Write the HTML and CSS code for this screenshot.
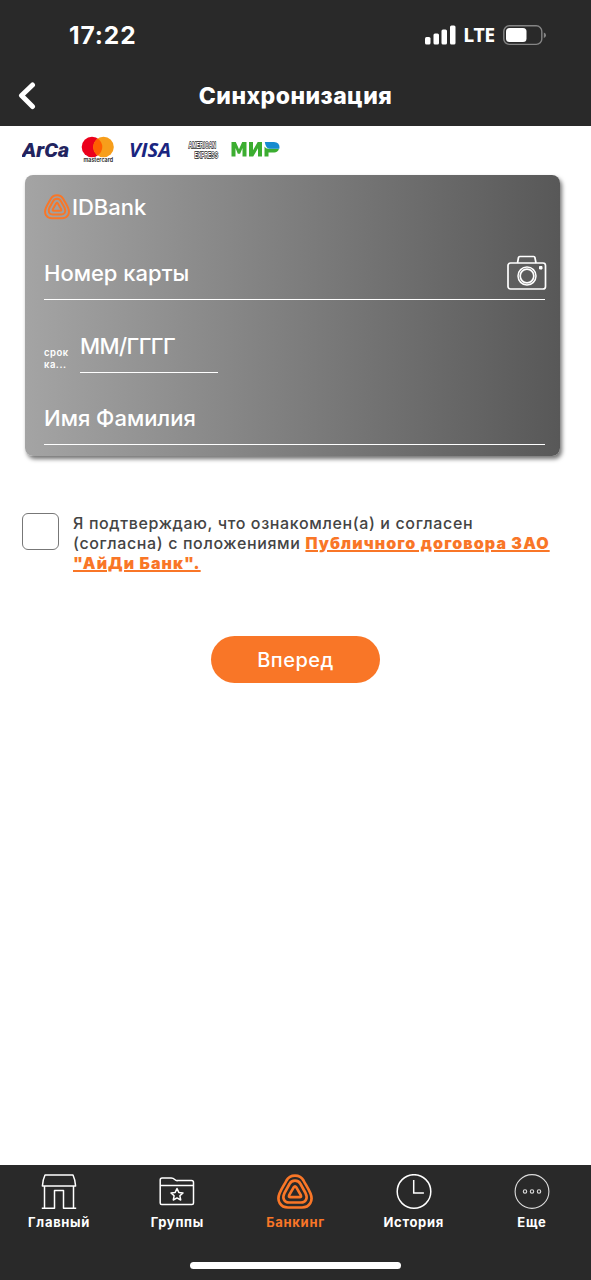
FILE: index.html
```html
<!DOCTYPE html>
<html lang="ru">
<head>
<meta charset="utf-8">
<title>Синхронизация</title>
<link rel="stylesheet" href="styles.css">
</head>
<body>
<svg width="0" height="0" class="defs">
  <symbol id="idbank" viewBox="0 0 36 36">
    <g fill="none" stroke="currentColor" stroke-linejoin="round">
      <path stroke-width="2.700" d="M9.500 6.500C13 0 23 0 26.500 6.500C28.500 10.500 31.500 14.500 33.500 19.500C36.500 27 32.500 33.500 25 33.500H11C3.500 33.500-.5 27 2.500 19.500C4.500 14.500 7.500 10.500 9.500 6.500Z"/>
      <path stroke-width="2.700" d="M12.500 10C14.700 5.500 21.300 5.500 23.500 10L28.500 19C31.200 24.500 28.500 28.500 24 28.500H12C7.500 28.500 4.800 24.500 7.500 19Z"/>
      <path stroke-width="2.700" d="M16.800 13.200Q18 11.300 19.200 13.200L23.800 21.200Q24.700 23.200 22.500 23.200H13.500Q11.300 23.200 12.200 21.200Z"/>
    </g>
  </symbol>
</svg>
<div class="app">
  <header class="top">
    <div class="status">
      <span class="time">17:22</span>
      <div class="signals">
        <svg width="31" height="20" viewBox="0 0 31 20" fill="#fff"><rect x="0" y="12" width="5.500" height="7.500" rx="1.500"/><rect x="8.500" y="8.500" width="5.500" height="11" rx="1.500"/><rect x="16.500" y="4.500" width="5.500" height="15" rx="1.500"/><rect x="25" y="0.500" width="5.500" height="19" rx="1.500"/></svg>
        <span class="lte">LTE</span>
        <svg width="44" height="21" viewBox="0 0 44 21"><rect x=".8" y=".8" width="38" height="18.600" rx="5.500" fill="none" stroke="#858585" stroke-width="1.400"/><rect x="3" y="3" width="20.500" height="14" rx="3.500" fill="#fff"/><path d="M40.800 7.500q2.200.8 2.200 2.800t-2.200 2.800z" fill="#858585"/></svg>
      </div>
    </div>
    <div class="bar">
      <svg class="back" width="18" height="28" viewBox="0 0 18 28" fill="none" stroke="#fff" stroke-width="5" stroke-linecap="round" stroke-linejoin="round"><path d="M14.500 3L3.500 13.500L14.500 24.500"/></svg>
      <h1 class="title">Синхронизация</h1>
    </div>
  </header>
  <main class="content">
    <svg class="brands" width="270" height="34" viewBox="0 0 270 34">
      <text class="arca" x="0" y="23.500" textLength="47" lengthAdjust="spacingAndGlyphs">ArCa</text>
      <circle cx="70" cy="14" r="10.300" fill="#eb001b"/><circle cx="81.500" cy="14" r="10.300" fill="#f79e1b"/><path d="M75.750 5.450a10.300 10.300 0 0 1 0 17.100a10.300 10.300 0 0 1 0-17.100z" fill="#ff5f00"/>
      <text class="mc" x="61.500" y="28.500" textLength="29.500" lengthAdjust="spacingAndGlyphs">mastercard</text>
      <text class="visa" x="107" y="24" textLength="42" lengthAdjust="spacingAndGlyphs">VISA</text>
      <text class="amex" x="166.500" y="14.500" textLength="27.500" lengthAdjust="spacingAndGlyphs">AMERICAN</text>
      <text class="amex" x="172.500" y="25" textLength="23.500" lengthAdjust="spacingAndGlyphs">EXPRESS</text>
      <g fill="#3cad31"><path d="M209.500 23.500V9h4.300l3.200 7.300L220.200 9h4.300v14.500h-4V15l-2.400 5.700h-2.300L213.500 15v8.500z"/><path d="M227 23.500V9h4v8.200L235.700 9h4.300v14.500h-4v-8.200l-4.800 8.200z"/><path d="M242.500 23.500V13.500q1.200 2.200 4 2.200h10.500q-1.200 3.800-4.800 3.800H246.500v4z"/></g>
      <path d="M242.800 9h9.200q5.500.4 5.500 5.300l-.2 1.400H247.500q-3.800-.4-4.700-6.700z" fill="#168bd0"/>
    </svg>
    <section class="card">
      <div class="bank"><svg width="26" height="26" class="orange"><use href="#idbank"/></svg><span>IDBank</span></div>
      <div class="field number"><span class="ph">Номер карты</span>
        <svg class="camera" width="40" height="36" viewBox="0 0 40 36" fill="none" stroke="#fff" stroke-width="1.700" stroke-linejoin="round"><rect x="1" y="8" width="37.500" height="26" rx="2.500"/><path d="M10.500 8l1-5.500q.2-1 1.200-1h14q1 0 1.200 1L29 8"/><circle cx="20" cy="21" r="9" stroke-width="1.500"/><circle cx="20" cy="21" r="6.800" stroke-width="1.700"/><rect x="32.500" y="11.500" width="2.500" height="2.500" fill="#fff" stroke-width="1"/></svg>
      </div>
      <div class="expiry"><span class="caption">срок<br>ка...</span><div class="field date"><span class="ph">ММ/ГГГГ</span></div></div>
      <div class="field name"><span class="ph">Имя Фамилия</span></div>
    </section>
    <div class="consent">
      <span class="checkbox"></span>
      <p class="terms">Я подтверждаю, что ознакомлен(а) и согласен<br>(согласна) с положениями <a class="link">Публичного договора ЗАО</a><br><a class="link">"АйДи Банк".</a></p>
    </div>
    <button class="next">Вперед</button>
  </main>
  <footer class="tabs">
    <nav class="nav">
      <a class="tab"><svg width="36" height="36" viewBox="0 0 36 36" fill="none" stroke="#fff" stroke-width="1.500" stroke-linejoin="round"><path d="M4 1h28q2.300 5 2.600 11H1.400Q1.700 6 4 1zM3.500 12v22M32.500 12v22M.8 34.200H13.500V16.500h9v17.700h12.700"/></svg><span>Главный</span></a>
      <a class="tab"><svg width="36" height="36" viewBox="0 0 36 36" fill="none" stroke="#fff" stroke-width="1.500" stroke-linejoin="round"><path d="M1.200 29V6q0-2 2-2h9q2 0 3.500 1.500T19 6.500h13.500q2 0 2 2v20.500q0 1.500-1.500 1.500H2.700q-1.500 0-1.500-1.500zM1.200 11.500h33.300"/><path d="M18 14.500l1.800 3.900 4.200.5-3.100 2.900.8 4.200-3.700-2.100-3.700 2.100.8-4.200-3.100-2.900 4.200-.5z"/></svg><span>Группы</span></a>
      <a class="tab orange"><svg width="36" height="36"><use href="#idbank"/></svg><span>Банкинг</span></a>
      <a class="tab"><svg width="36" height="36" viewBox="0 0 36 36" fill="none" stroke="#fff" stroke-width="1.500"><circle cx="18" cy="17.500" r="16.800"/><path d="M17.700 6v13h10.200"/></svg><span>История</span></a>
      <a class="tab"><svg width="36" height="36" viewBox="0 0 36 36" fill="none" stroke="#ddd" stroke-width="1.100"><circle cx="18" cy="17.500" r="16.900"/><circle cx="11" cy="17.500" r="1.700"/><circle cx="18" cy="17.500" r="1.700"/><circle cx="25" cy="17.500" r="1.700"/></svg><span>Еще</span></a>
    </nav>
    <div class="home"></div>
  </footer>
</div>
</body>
</html>
```
FILE: styles.css
```css
* { box-sizing: border-box; }
body { margin: 0; background: #fff; font-family: Inter, "Liberation Sans", sans-serif; }
svg { display: block; flex: none; }
.defs { position: absolute; }
.app { width: 591px; height: 1280px; display: flex; flex-direction: column; }
.top { height: 126px; background: #292929; color: #fff; flex: none; }
.status { height: 70px; padding: 0 44px 0 69px; display: flex; justify-content: space-between; align-items: center; }
.time { font-size: 24.500px; font-weight: 700; letter-spacing: .9px; }
.signals { display: flex; align-items: center; }
.lte { font: 700 19.500px "Noto Sans", sans-serif; margin: 0 8px 0 7px; line-height: 20px; letter-spacing: -.3px; }
.bar { height: 51px; padding: 0 18px; display: grid; grid-template-columns: 18px 1fr 18px; align-items: center; }
.title { margin: 0; text-align: center; font-size: 23px; font-weight: 800; letter-spacing: .45px; }
.content { flex: 1; padding: 7px 22px 0; }
.brands { margin-bottom: 8px; }
.arca { font: italic 900 20px Roboto, sans-serif; fill: #22245f; }
.mc { font: 600 6px Inter, sans-serif; fill: #222; }
.visa { font: italic 700 20px "Open Sans", sans-serif; fill: #1a2580; }
.amex { font: 700 8.500px "Liberation Sans", sans-serif; fill: #fff; stroke: #222; stroke-width: 1.300px; paint-order: stroke; }
.card { width: 535px; height: 281px; margin-left: 3px; padding: 18px 15px 0 19px; border-radius: 8px; color: #fff; background: linear-gradient(90deg, #a4a4a4, #585858); box-shadow: 2px 3px 4px rgba(0,0,0,.55); display: flex; flex-direction: column; }
.bank { height: 28px; display: flex; align-items: center; gap: 2px; font-size: 22px; font-weight: 500; }
.orange { color: #f97627; }
.field { border-bottom: 1px solid #fff; display: flex; justify-content: space-between; font-size: 22px; font-weight: 500; }
.number { height: 79px; padding-bottom: 8px; align-items: flex-end; }
.number .ph { line-height: 36px; }
.camera { margin-right: -2px; }
.expiry { height: 73px; display: flex; align-items: flex-end; }
.caption { width: 36px; font-size: 9.500px; font-weight: 600; letter-spacing: .5px; line-height: 12px; padding-bottom: 2px; }
.date { width: 138px; height: 44px; line-height: 35px; letter-spacing: -.6px; }
.name { height: 72px; align-items: flex-end; line-height: 51px; }
.consent { display: flex; gap: 14px; margin-top: 57px; }
.checkbox { width: 37px; height: 37px; border: 1px solid #777; border-radius: 6px; flex: none; }
.terms { margin: 0; font-size: 16px; font-weight: 500; line-height: 20px; letter-spacing: .63px; color: #444; white-space: nowrap; }
.link { color: #f97627; font-weight: 900; letter-spacing: 1.090px; text-decoration: underline; text-decoration-thickness: 2px; }
.next { display: block; width: 169px; height: 47px; margin: 63px auto 0; border: 0; border-radius: 24px; background: #f97627; color: #fff; font: 500 20px Inter, sans-serif; letter-spacing: .5px; }
.tabs { height: 115px; background: #292929; color: #fff; flex: none; }
.nav { display: grid; grid-template-columns: repeat(5, 1fr); height: 97px; padding-top: 9px; }
.tab { display: flex; flex-direction: column; align-items: center; gap: 4px; font-size: 13px; font-weight: 700; line-height: 16px; letter-spacing: .7px; }
.home { width: 211px; height: 7px; border-radius: 4px; background: #fff; margin: 0 auto; }
```
